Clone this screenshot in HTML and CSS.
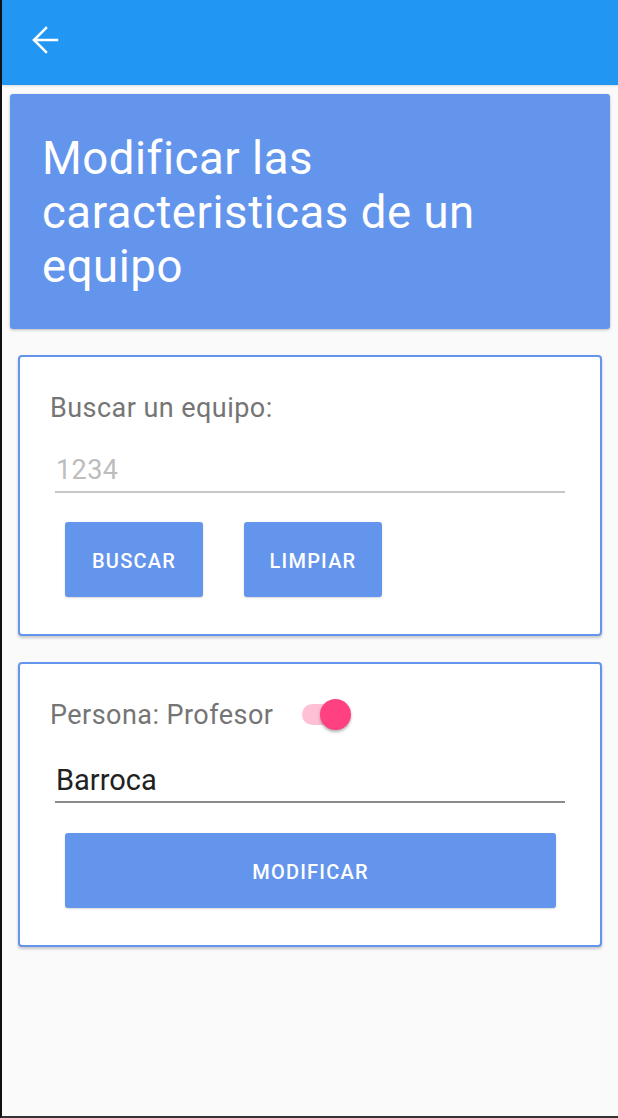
FILE: index.html
```html
<!DOCTYPE html>
<html lang="es">
<head>
<meta charset="utf-8">
<title>Modificar equipo</title>
<link rel="stylesheet" href="styles.css">
</head>
<body>
<div class="screen">
  <header class="appbar">
    <svg class="back" width="28" height="28" viewBox="0 0 28 28" aria-hidden="true">
      <path d="M26 14H3M15 2L3 14L15 26" fill="none" stroke="#fff" stroke-width="2.5" stroke-linecap="square" stroke-linejoin="miter"/>
    </svg>
  </header>
  <main class="content">
    <div class="banner">
      <h1 class="title">Modificar las caracteristicas de un equipo</h1>
    </div>
    <section class="card">
      <div class="label">Buscar un equipo:</div>
      <div class="field"><span class="placeholder">1234</span></div>
      <div class="btn-row">
        <button class="btn btn-small">BUSCAR</button>
        <button class="btn btn-small">LIMPIAR</button>
      </div>
    </section>
    <section class="card">
      <div class="switch-row">
        <span class="label">Persona: Profesor</span>
        <span class="switch"><span class="track"></span><span class="thumb"></span></span>
      </div>
      <div class="field field-filled"><span class="value">Barroca</span></div>
      <div class="btn-row">
        <button class="btn btn-wide">MODIFICAR</button>
      </div>
    </section>
  </main>
</div>
</body>
</html>
```

FILE: styles.css
```css
html, body {
  margin: 0;
  padding: 0;
}
body {
  font-family: Roboto, "Noto Sans", sans-serif;
  background: #fafafa;
}
.screen {
  box-sizing: border-box;
  width: 618px;
  height: 1118px;
  border-left: 2px solid #111;
  border-bottom: 2px solid #333;
  background: #fafafa;
  overflow: hidden;
}
.appbar {
  box-sizing: border-box;
  height: 85px;
  background: #2196f3;
  display: flex;
  align-items: flex-start;
  padding: 26px 0 0 29px;
  box-shadow: 0 1px 2px rgba(0,0,0,0.12);
}
.back {
  display: block;
}
.content {
  padding: 9px 8px 0 8px;
}
.banner {
  background: #6495ed;
  border-radius: 3px;
  box-shadow: 0 1px 3px rgba(0,0,0,0.25);
  height: 235px;
  box-sizing: border-box;
  padding: 38px 80px 0 32px;
}
.title {
  margin: 0;
  color: #fff;
  font-weight: 400;
  font-size: 45.5px;
  letter-spacing: 0.55px;
  line-height: 54px;
}
.card {
  margin: 26px 8px 0 8px;
  background: #fff;
  border: 2px solid #6495ed;
  border-radius: 4px;
  box-shadow: 0 2px 3px rgba(0,0,0,0.2);
  padding: 35px 35px 37px 30px;
}
.label {
  display: block;
  color: #757575;
  font-size: 27px;
  letter-spacing: 0.45px;
  line-height: 32px;
}
.field {
  margin: 30px 0 0 5px;
  padding: 0 0 5px 1px;
  border-bottom: 2px solid #c8c8c8;
  font-size: 27px;
  letter-spacing: 0.4px;
  line-height: 32px;
}
.placeholder {
  color: #bdbdbd;
}
.field-filled {
  margin-top: 32px;
  padding-bottom: 4px;
  font-size: 29px;
  letter-spacing: 0;
  line-height: 34px;
  border-bottom-color: #8a8a8a;
}
.value {
  color: #212121;
}
.btn-row {
  display: flex;
  gap: 41px;
  margin-top: 29px;
  padding-left: 15px;
}
.card .field-filled + .btn-row {
  margin-top: 30px;
}
.btn {
  border: none;
  background: #6495ed;
  color: #fff;
  font-family: Roboto, "Noto Sans", sans-serif;
  font-weight: 500;
  font-size: 20px;
  letter-spacing: 1.2px;
  height: 75px;
  border-radius: 3px;
  box-shadow: 0 1px 2px rgba(0,0,0,0.15);
  padding: 3px 0 0 0;
}
.btn-small {
  width: 138px;
}
.btn-wide {
  width: 491px;
}
.switch-row {
  display: flex;
  align-items: center;
}
.switch {
  position: relative;
  width: 52px;
  height: 32px;
  margin-left: 29px;
}
.track {
  position: absolute;
  left: 0;
  top: 5px;
  width: 45px;
  height: 21px;
  border-radius: 11px;
  background: #ffc0d6;
}
.thumb {
  position: absolute;
  left: 18px;
  top: 0;
  width: 31px;
  height: 31px;
  border-radius: 50%;
  background: #ff4081;
  box-shadow: 0 2px 3px rgba(0,0,0,0.3);
}
```
